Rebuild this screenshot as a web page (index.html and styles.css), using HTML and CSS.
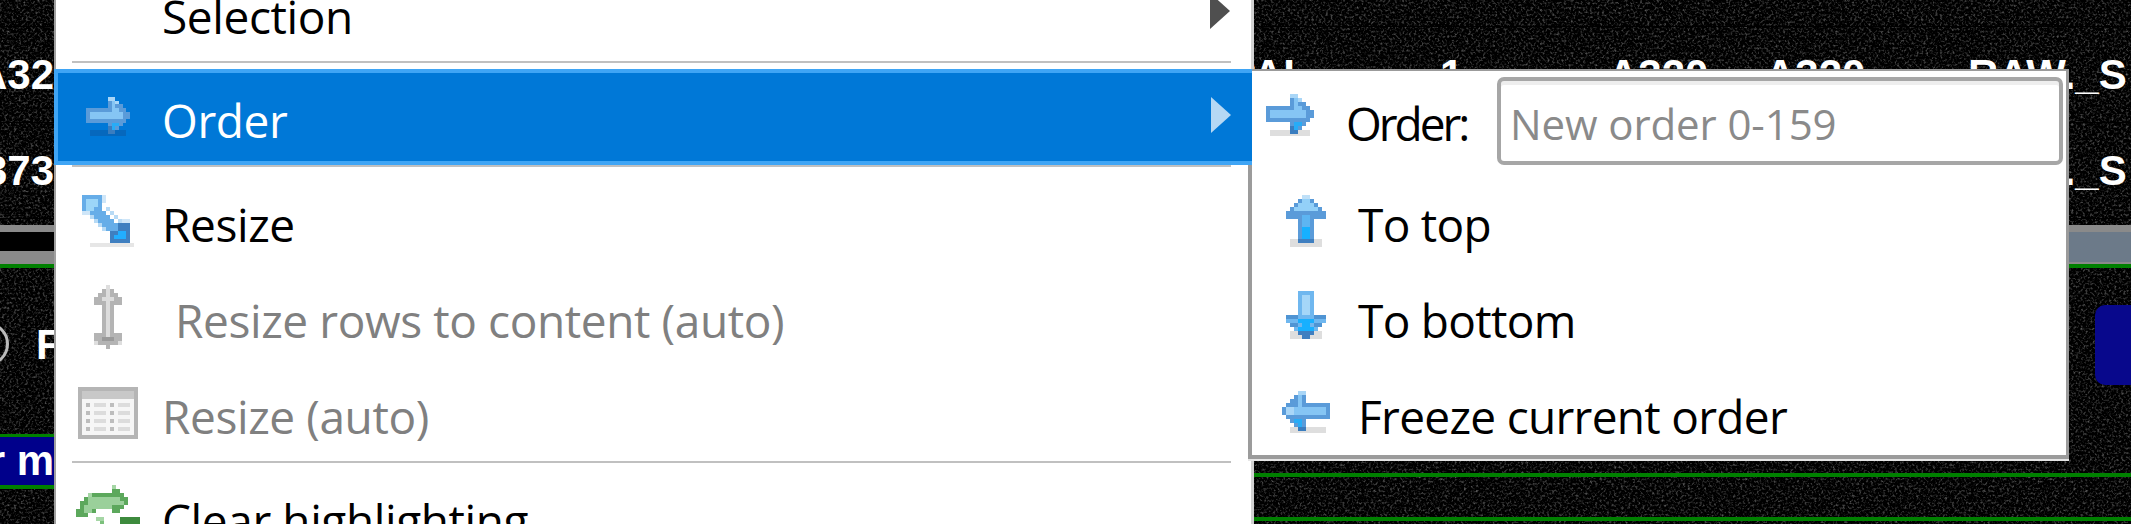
FILE: index.html
```html
<!DOCTYPE html>
<html lang="en">
<head>
  <meta charset="UTF-8" />
  <title>Context menu</title>
  <link rel="stylesheet" href="styles.css">
</head>
<body>
<div class="stage">

  <svg class="noise" width="2131" height="524">
    <filter id="grain" color-interpolation-filters="sRGB" x="0" y="0" width="100%" height="100%">
      <feTurbulence type="fractalNoise" baseFrequency="0.42" numOctaves="2" seed="7"/>
      <feColorMatrix values="0.9 0 0 0 -0.44  0.9 0 0 0 -0.44  0.9 0 0 0 -0.44  0 0 0 0 1"/>
    </filter>
    <rect width="2131" height="524" filter="url(#grain)"/>
  </svg>

  <!-- icons, drawn on the pixel grid of the original 16px bitmaps -->
  <svg class="defs" width="0" height="0">
    <symbol id="ic-right" viewBox="0 0 12 11" shape-rendering="crispEdges">
      <path fill="currentColor" d="M1 9h10v1.6H1z"/>
      <path fill="#5a9bd9" d="M0 3h6V0h2v1h1v1h1v1h1v1h1v2h-1v1h-1v1H9v1H8v1H6V7H0z"/>
      <path fill="#a9d6f7" d="M6 0h2v1H6zM8 1h1v1H8z"/>
      <path fill="#85c5f4" d="M1 4h6V1h1v2h1v1h1v2H1z"/>
      <path fill="#27acf7" d="M7 7h2v1H8v1H7z"/>
      <path fill="#3a7dbf" d="M6 8h1v2H6zM7 9h1v1H7z"/>
    </symbol>
    <symbol id="ic-left" viewBox="0 0 12 11" shape-rendering="crispEdges">
      <path fill="currentColor" d="M2 9h9v1.6H2z"/>
      <path fill="#5a9bd9" d="M12 3H6V0H4v1H3v1H2v1H1v1H0v2h1v1h1v1h1v1h1v1h2V7h6z"/>
      <path fill="#a9d6f7" d="M4 0h2v1H4zM1 4h3v2H1z"/>
      <path fill="#85c5f4" d="M11 4H5V1H4v3H3v2h8z"/>
      <path fill="#27acf7" d="M3 7h2v2H4V8H3z"/>
      <path fill="#3a7dbf" d="M4 9h2v1H4z"/>
    </symbol>
    <symbol id="ic-up" viewBox="0 0 10 13" shape-rendering="crispEdges">
      <path fill="#dedede" d="M1 11h8v2H1z"/>
      <path fill="#bfe0f8" d="M4 0h2v1H4z"/>
      <path fill="#5a9bd9" d="M3 1h4v1h1v1h1v1h1v2H7v6H3V6H0V4h1V3h1V2h1z"/>
      <path fill="#93d0f8" d="M4 1h2v1h1v1h1v1H2V3h1V2h1z"/>
      <path fill="#5db5f2" d="M4 5h2v3H4z"/>
      <path fill="#17b0ff" d="M4 8h2v3H4z"/>
      <path fill="#3f7fc0" d="M3 11h4v1H3z"/>
    </symbol>
    <symbol id="ic-down" viewBox="0 0 10 13" shape-rendering="crispEdges">
      <path fill="#dedede" d="M1 10h8v2H1z"/>
      <path fill="#6fb7ef" d="M3 0h4v6h3v2H9v1H8v1H7v1H6v1H4v-1H3v-1H2V9H1V8H0V6h3z"/>
      <path fill="#a5d6f8" d="M4 1h2v5H4z"/>
      <path fill="#4f94d3" d="M0 6h3v1H0zM7 6h3v1H7zM1 8h2v1H1zM7 8h2v1H7z"/>
      <path fill="#17b0ff" d="M3 7h4v1H6v1h1v1H3V9h1V8H3z"/>
      <path fill="#3f7fc0" d="M3 10h4v1H3zM4 11h2v1H4z"/>
    </symbol>
    <symbol id="ic-resize" viewBox="0 0 13 13" shape-rendering="crispEdges">
      <path fill="#e6e6e6" d="M2 12h11v1H2z"/>
      <path fill="#cfe6f8" d="M5 0h1v2H5zM0 4h2v1H0zM10 6h2v1h-2z"/>
      <path fill="#b7daf5" d="M6 3h1v1h1v1h1v1h1v1H9V6H8V5H7V4H6zM2 5h1v1h1v1h1v1h1v1H5V8H4V7H3V6H2z"/>
      <path fill="#66ade8" d="M0 0h5v4H0zM2 4h4v1H2zM3 5h4v1H3zM4 6h4v1H4zM5 7h4v1H5zM6 8h3v1H6z"/>
      <path fill="#9cd6f8" d="M1 1h3v2H3v1H1z"/>
      <path fill="#3f7fc0" d="M9 7h3v5H7V9h2z"/>
      <path fill="#22aeff" d="M9 9h2v2H8v-1h1z"/>
    </symbol>
    <symbol id="ic-rows" viewBox="0 0 7 16" shape-rendering="crispEdges">
      <path fill="#dedede" d="M3 0h1v1H3zM0 13h7v2H0z"/>
      <path fill="#b4b4b4" d="M2 1h3v1h1v1h1v2H5v7h2v2H6v1H4v1H3v-1H1v-1H0v-2h2V5H0V3h1V2h1z"/>
      <path fill="#dcdcdc" d="M3 1h1v12H3zM2 3h3v1H2z"/>
      <path fill="#9a9a9a" d="M2 13h3v1H2z"/>
    </symbol>
    <symbol id="ic-table" viewBox="0 0 15 13" shape-rendering="crispEdges">
      <path fill="#b5b5b5" d="M0 0h15v13H0z"/>
      <path fill="#c8c8c8" d="M1 1h13v2H1z"/>
      <path fill="#f6f6f6" d="M1 3h13v9H1z"/>
      <path fill="#bdbdbd" d="M2 4h1v1H2zM8 4h1v1H8zM2 6h1v1H2zM8 6h1v1H8zM2 8h1v1H2zM8 8h1v1H8zM2 10h1v1H2zM8 10h1v1H8z"/>
      <path fill="#dcdcdc" d="M4 4h3v1H4zM10 4h3v1h-3zM4 6h3v1H4zM10 6h3v1h-3zM4 8h3v1H4zM10 8h3v1h-3zM4 10h3v1H4zM10 10h3v1h-3z"/>
    </symbol>
    <symbol id="ic-clear" viewBox="0 0 16 13" shape-rendering="crispEdges">
      <path fill="#a5d6a5" d="M9 0h1v1H9zM3 2h1v1H3zM5 8h2v1H5zM1 4h1v1H1z"/>
      <path fill="#5ca85c" d="M9 1h2v1h1v1h1v2h-1v1h-1v1H9V6H5v1H3v1H0V6h1V4h1V3h2V2h5z"/>
      <path fill="#9ad09a" d="M3 3h8v1h1v1H9v1H4v1H2V5h1z"/>
      <path fill="#3d8a3d" d="M11 8h5v5h-5z"/>
      <path fill="#7cc07c" d="M6 9h1v4H6zM4 10h2v3H4z"/>
    </symbol>
  </svg>

  <!-- the table that the menu was opened over -->
  <div class="rows">
    <div class="row">
      <span></span><span></span><span></span><span></span><span></span><span>RAW._S</span>
    </div>
    <div class="row">
      <span>A32</span><span>PAL</span><span>1</span><span>A320</span><span>A320</span><span>RAW._S</span>
    </div>
    <div class="row">
      <span>373</span><span></span><span></span><span></span><span></span><span>RAW._S</span>
    </div>
  </div>

  <div class="scrollbar">
    <div class="track"></div>
    <div class="thumb"></div>
  </div>

  <div class="lower">
    <div class="panel-left">
      <div class="status">
        <span class="ring"></span>
        <span>F</span>
      </div>
      <div class="banner">r m</div>
    </div>
    <div class="panel-right">
      <div class="badge"></div>
      <div class="lane"></div>
    </div>
  </div>

  <div class="menu">
    <div class="item">
      <span class="icon"></span>
      <span class="label">Selection</span>
      <span class="caret"></span>
    </div>
    <div class="sep"></div>
    <div class="item active">
      <span class="icon"><svg class="i-active" width="44" height="44"><use href="#ic-right"/></svg></span>
      <span class="label">Order</span>
      <span class="caret"></span>
    </div>
    <div class="sep"></div>
    <div class="item">
      <span class="icon"><svg width="52" height="52"><use href="#ic-resize"/></svg></span>
      <span class="label">Resize</span>
    </div>
    <div class="item disabled">
      <span class="icon"><svg width="28" height="64"><use href="#ic-rows"/></svg></span>
      <span class="label indent">Resize rows to content (auto)</span>
    </div>
    <div class="item disabled">
      <span class="icon"><svg width="60" height="52"><use href="#ic-table"/></svg></span>
      <span class="label">Resize (auto)</span>
    </div>
    <div class="sep"></div>
    <div class="item">
      <span class="icon icon-top"><svg width="64" height="52"><use href="#ic-clear"/></svg></span>
      <span class="label">Clear highlighting</span>
    </div>
  </div>

  <div class="submenu">
    <div class="sub-order">
      <svg width="48" height="44"><use href="#ic-right"/></svg>
      <label class="sub-order-label" for="newOrder">Order:</label>
      <input id="newOrder" type="text" placeholder="New order 0-159">
    </div>
    <div class="sub-item">
      <span class="sub-icon"><svg width="40" height="52"><use href="#ic-up"/></svg></span>
      <span class="label">To top</span>
    </div>
    <div class="sub-item">
      <span class="sub-icon"><svg width="40" height="52"><use href="#ic-down"/></svg></span>
      <span class="label">To bottom</span>
    </div>
    <div class="sub-item">
      <span class="sub-icon"><svg width="48" height="44"><use href="#ic-left"/></svg></span>
      <span class="label">Freeze current order</span>
    </div>
  </div>

</div>
</body>
</html>
```

FILE: styles.css
```css
html, body {
  margin: 0;
  padding: 0;
}

.stage {
  position: relative;
  width: 2131px;
  height: 524px;
  overflow: hidden;
  background-color: #000;
  font-family: "Liberation Sans", Arial, sans-serif;
}

.noise {
  position: absolute;
  top: 0;
  left: 0;
}

.defs {
  position: absolute;
}

/* table behind the menu */
.rows {
  position: relative;
  margin-top: -69px;
}

.row {
  display: grid;
  grid-template-columns: 54px 1255px 299px 157px 203px 1fr;
  height: 95px;
  align-items: center;
  border-bottom: 1px solid #000;
  color: white;
  font-size: 42px;
  font-weight: bold;
  white-space: nowrap;
}

.row span {
  display: flex;
  min-width: 0;
}

.row span:nth-child(1),
.row span:nth-child(2) {
  justify-content: flex-end;
}

.row span:nth-child(3) {
  padding-left: 131px;
}

.scrollbar {
  position: relative;
  display: flex;
  margin-top: 6px;
  height: 32px;
  border-top: 7px solid #8a8a8a;
}

.track {
  flex: 1;
  background-color: #000;
  border-bottom: 13px solid #8a8a8a;
}

.thumb {
  width: 400px;
  background-color: #6c7a89;
  border-bottom: 2px solid #8a8a8a;
}

.lower {
  position: relative;
  display: flex;
  color: white;
  font-size: 42px;
  font-weight: bold;
}

.panel-left {
  width: 54px;
  flex: none;
}

.status {
  display: flex;
  height: 173px;
  box-sizing: border-box;
  padding-top: 55px;
  border-top: 4px solid #008000;
  border-bottom: 3px solid #008000;
  line-height: 44px;
}

.ring {
  flex: none;
  box-sizing: border-box;
  width: 44px;
  height: 44px;
  margin-left: -35px;
  margin-right: 27px;
  margin-top: -1px;
  border: 3px solid #bbb;
  border-radius: 50%;
}

.banner {
  display: flex;
  justify-content: flex-end;
  height: 48px;
  line-height: 48px;
  background-color: #00008b;
  border-bottom: 4px solid #008000;
  white-space: pre;
}

.panel-right {
  flex: 1;
  margin-left: 1200px;
  border-top: 4px solid #008000;
}

.badge {
  width: 80px;
  height: 80px;
  margin-top: 37px;
  margin-left: 841px;
  margin-bottom: 88px;
  background-color: #08088c;
  border-radius: 10px;
}

.lane {
  height: 40px;
  border-top: 4px solid #008000;
  border-bottom: 4px solid #008000;
}

/* context menu */
.menu {
  position: absolute;
  top: -35px;
  left: 54px;
  width: 1200px;
  box-sizing: border-box;
  background-color: white;
  border-left: 2px solid #a0a0a0;
  border-right: 3px solid #d2d2d2;
  font-family: "Open Sans", sans-serif;
  font-size: 46px;
  letter-spacing: -0.4px;
  color: #000;
}

.label {
  padding-top: 6px;
}

.item {
  display: flex;
  align-items: center;
  height: 96px;
  box-sizing: border-box;
  padding-left: 14px;
  padding-right: 21px;
  white-space: nowrap;
}

.icon {
  flex: none;
  display: flex;
  justify-content: center;
  width: 76px;
  margin-right: 16px;
}

.icon-top {
  align-self: flex-start;
  margin-top: 16px;
}

.icon svg,
.sub-icon svg,
.sub-order svg {
  display: block;
  color: #dedede;
}

.icon .i-active {
  color: #0668bd;
}

.caret {
  margin-left: auto;
  margin-top: -4px;
  width: 0;
  height: 0;
  border-left: 20px solid #4f4f4f;
  border-top: 18px solid transparent;
  border-bottom: 18px solid transparent;
}

.sep {
  height: 2px;
  margin: 0 20px 6px 16px;
  background-color: #c0c0c0;
}

.item.active {
  position: relative;
  z-index: 2;
  margin-left: -2px;
  margin-right: -1px;
  padding-left: 12px;
  background-color: #0078d7;
  border: 4px solid #3fa5f5;
  border-right: none;
  color: white;
}

.item.active .caret {
  border-left-color: #b5d8f4;
}

.item.disabled {
  color: #808080;
}

.indent {
  margin-left: 13px;
}

/* flyout */
.submenu {
  position: absolute;
  z-index: 1;
  top: 69px;
  left: 1248px;
  width: 821px;
  height: 390px;
  box-sizing: border-box;
  overflow: hidden;
  background-color: white;
  border: 3px solid #9b9b9b;
  border-top-width: 2px;
  border-left-width: 4px;
  border-bottom-width: 4px;
  box-shadow: 0 2px 0 #e6e6e6;
  font-family: "Open Sans", sans-serif;
  font-size: 46px;
  letter-spacing: -0.7px;
  color: #000;
}

.sub-order {
  display: flex;
  align-items: center;
  height: 94px;
  margin-bottom: 8px;
  padding-left: 14px;
  padding-right: 7px;
}

.sub-order svg {
  margin-top: -4px;
}

.sub-order-label {
  flex: none;
  width: 151px;
  margin-left: 32px;
  padding-top: 9px;
  letter-spacing: -3px;
}

.sub-order input {
  flex: 1;
  min-width: 0;
  align-self: flex-end;
  height: 88px;
  box-sizing: border-box;
  margin-right: -4px;
  padding: 4px 0 0 9px;
  border: 4px solid #a6a6a6;
  border-radius: 7px;
  box-shadow: inset 0 4px 0 #eee;
  outline: none;
  font-family: "Open Sans", sans-serif;
  font-size: 42px;
  letter-spacing: -0.1px;
}

.sub-order input::placeholder {
  color: #8a8a8a;
  opacity: 1;
}

.sub-item {
  display: flex;
  align-items: center;
  height: 96px;
  padding-left: 30px;
  white-space: nowrap;
}

.sub-icon {
  flex: none;
  display: flex;
  justify-content: center;
  width: 48px;
  margin-right: 28px;
}
```
